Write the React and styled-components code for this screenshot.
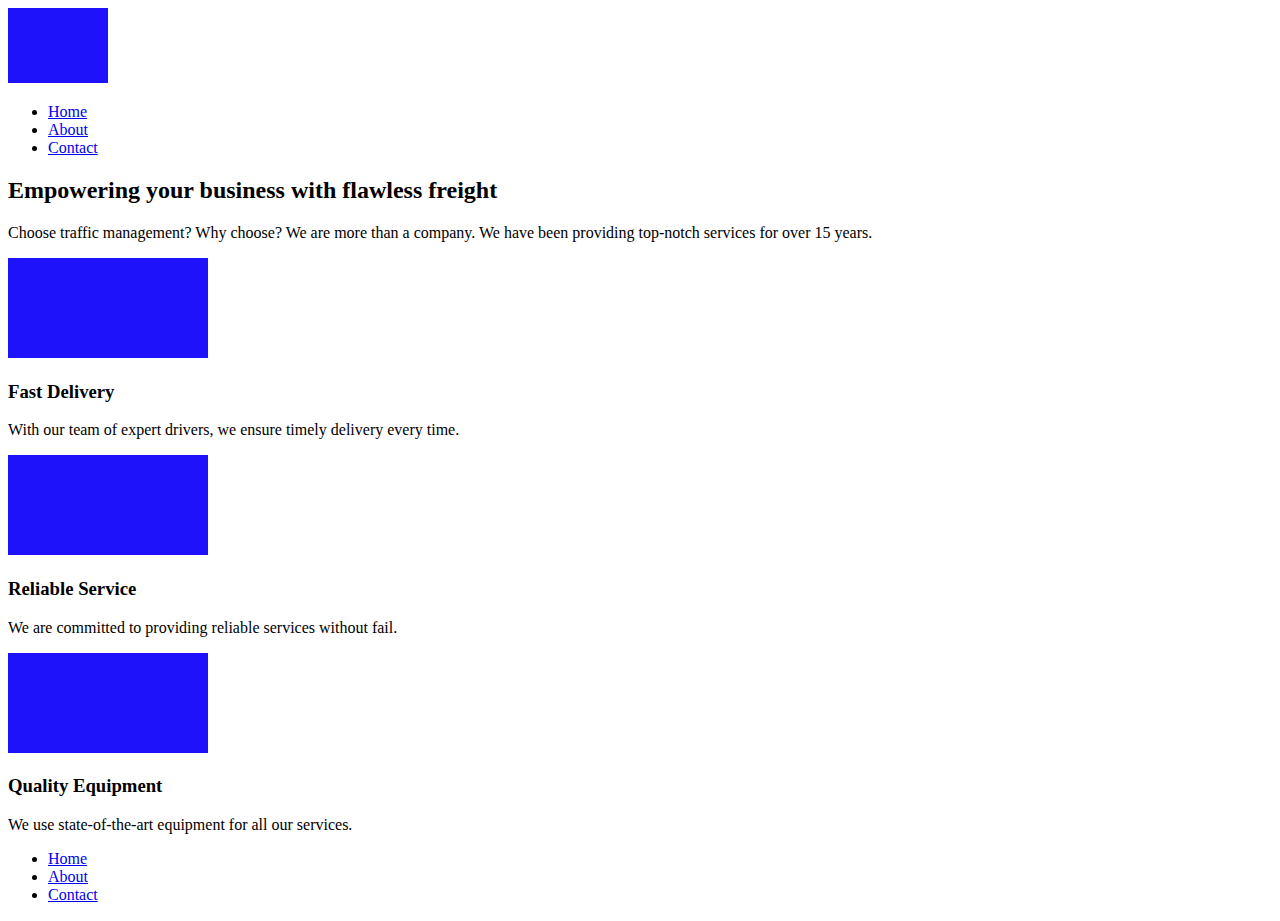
import React from 'react';
import styled, { createGlobalStyle } from 'styled-components';

const GlobalStyle = createGlobalStyle`
  body {
    margin: 8px;
    font-family: "Liberation Serif", "Times New Roman", serif;
    font-size: 16px;
    color: #000;
    background: #fff;
  }
  a {
    color: #0000ee;
  }
`;

const LogoWrap = styled.div``;

const Placeholder = styled.span`
  display: inline-block;
  width: ${(p) => p.$w}px;
  height: ${(p) => p.$h}px;
  background: #1e12fa;
`;

const NavList = styled.ul`
  margin: 16px 0;
  padding-left: 40px;
  list-style: disc;
`;

const Title = styled.h2`
  font-size: 1.5em;
  margin: 0.83em 0;
  font-weight: bold;
`;

const Text = styled.p`
  margin: 16px 0;
`;

const Feature = styled.div``;

const FeatureTitle = styled.h3`
  font-size: 1.17em;
  margin: 1em 0;
  font-weight: bold;
`;

const links = ['Home', 'About', 'Contact'];

const features = [
  { title: 'Fast Delivery', text: 'With our team of expert drivers, we ensure timely delivery every time.' },
  { title: 'Reliable Service', text: 'We are committed to providing reliable services without fail.' },
  { title: 'Quality Equipment', text: 'We use state-of-the-art equipment for all our services.' }
];

function Nav() {
  return (
    <NavList>
      {links.map((l) => (
        <li key={l}><a href="#">{l}</a></li>
      ))}
    </NavList>
  );
}

export default function App() {
  return (
    <>
      <GlobalStyle />
      <header>
        <LogoWrap>
          <Placeholder $w={100} $h={75} />
        </LogoWrap>
        <nav>
          <Nav />
        </nav>
      </header>
      <main>
        <section>
          <Title>Empowering your business with flawless freight</Title>
          <Text>Choose traffic management? Why choose? We are more than a company. We have been providing top-notch services for over 15 years.</Text>
        </section>
        <section>
          {features.map((f) => (
            <Feature key={f.title}>
              <Placeholder $w={200} $h={100} />
              <FeatureTitle>{f.title}</FeatureTitle>
              <Text>{f.text}</Text>
            </Feature>
          ))}
        </section>
      </main>
      <footer>
        <Nav />
      </footer>
    </>
  );
}
